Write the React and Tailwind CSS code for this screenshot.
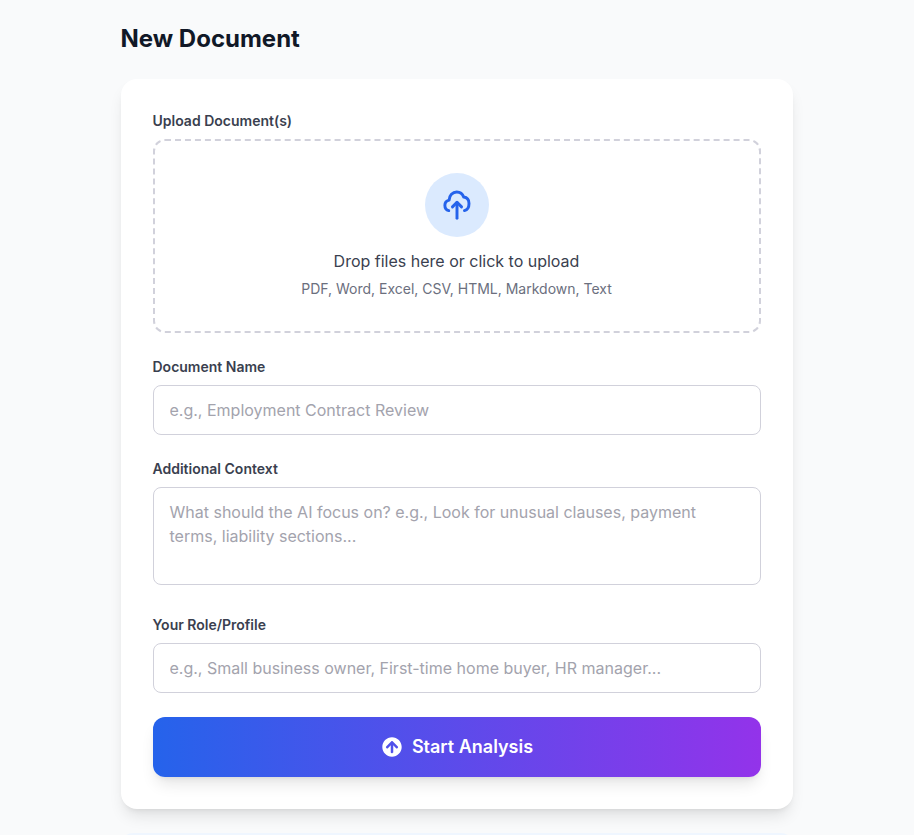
import React from "react";
import { FaArrowCircleUp } from "react-icons/fa";

const labelClass = "block text-sm font-semibold text-[#3a3f4f] mb-2";
const inputClass =
  "w-full px-4 py-3 border border-[#d1d1db] rounded-lg text-base text-[#111827] placeholder:text-[#a3a3ad] bg-white resize-none focus:outline-none";

const UploadIcon = () => (
  <svg
    viewBox="0 0 24 24"
    fill="none"
    stroke="currentColor"
    strokeWidth="2.2"
    strokeLinecap="round"
    strokeLinejoin="round"
    className="w-8 h-8 text-[#2563eb]"
  >
    <path d="M5.8 16.2C3.9 15.8 2.9 14.1 2.9 12.2C2.9 10.3 4.2 8.8 6.1 8.3C6.1 4.8 8.8 2.2 11.8 2.2C14.2 2.2 16.2 3.6 17 6C19.4 6.3 21 8.2 21 10.8C21 13.5 19.6 15.7 17.6 16.2" />
    <path d="M12 22V10.2" />
    <path d="M8.6 13.4L12 10L15.4 13.4" />
  </svg>
);

const App = () => {
  return (
    <div className="h-[835px] overflow-hidden bg-[#f9fafb] pr-px font-['Inter',sans-serif]">
      <div className="max-w-2xl mx-auto pt-[23px]">
        <h1 className="text-2xl font-bold text-[#111827] mb-6">New Document</h1>

        <div className="bg-white rounded-2xl shadow-lg p-8">
          <div className="mb-6">
            <label className={labelClass}>Upload Document(s)</label>
            <div className="border-2 border-dashed border-[#d1d1db] rounded-xl p-8 text-center">
              <div className="w-16 h-16 mx-auto mb-3 flex items-center justify-center rounded-full bg-[#dbeafe]">
                <UploadIcon />
              </div>
              <p className="text-[#3a3f4f] mb-1.5">Drop files here or click to upload</p>
              <p className="text-sm text-[#6b6f7e]">
                PDF, Word, Excel, CSV, HTML, Markdown, Text
              </p>
            </div>
          </div>

          <div className="mb-6">
            <label className={labelClass}>Document Name</label>
            <input
              type="text"
              className={inputClass}
              placeholder="e.g., Employment Contract Review"
            />
          </div>

          <div className="mb-6">
            <label className={labelClass}>Additional Context</label>
            <textarea
              rows={3}
              className={inputClass}
              placeholder="What should the AI focus on? e.g., Look for unusual clauses, payment terms, liability sections..."
            />
          </div>

          <div className="mb-6">
            <label className={labelClass}>Your Role/Profile</label>
            <input
              type="text"
              className={inputClass}
              placeholder="e.g., Small business owner, First-time home buyer, HR manager..."
            />
          </div>

          <button className="w-full py-4 pl-0.5 flex items-center justify-center gap-2.5 rounded-xl bg-linear-to-r/srgb from-[#2563eb] to-[#9333ea] text-white text-lg font-semibold shadow-lg">
            <FaArrowCircleUp className="w-5 h-5" />
            Start Analysis
          </button>
        </div>

        <div className="mt-6 h-24 rounded-xl bg-[#eff6ff]" />
      </div>
    </div>
  );
};

export default App;
